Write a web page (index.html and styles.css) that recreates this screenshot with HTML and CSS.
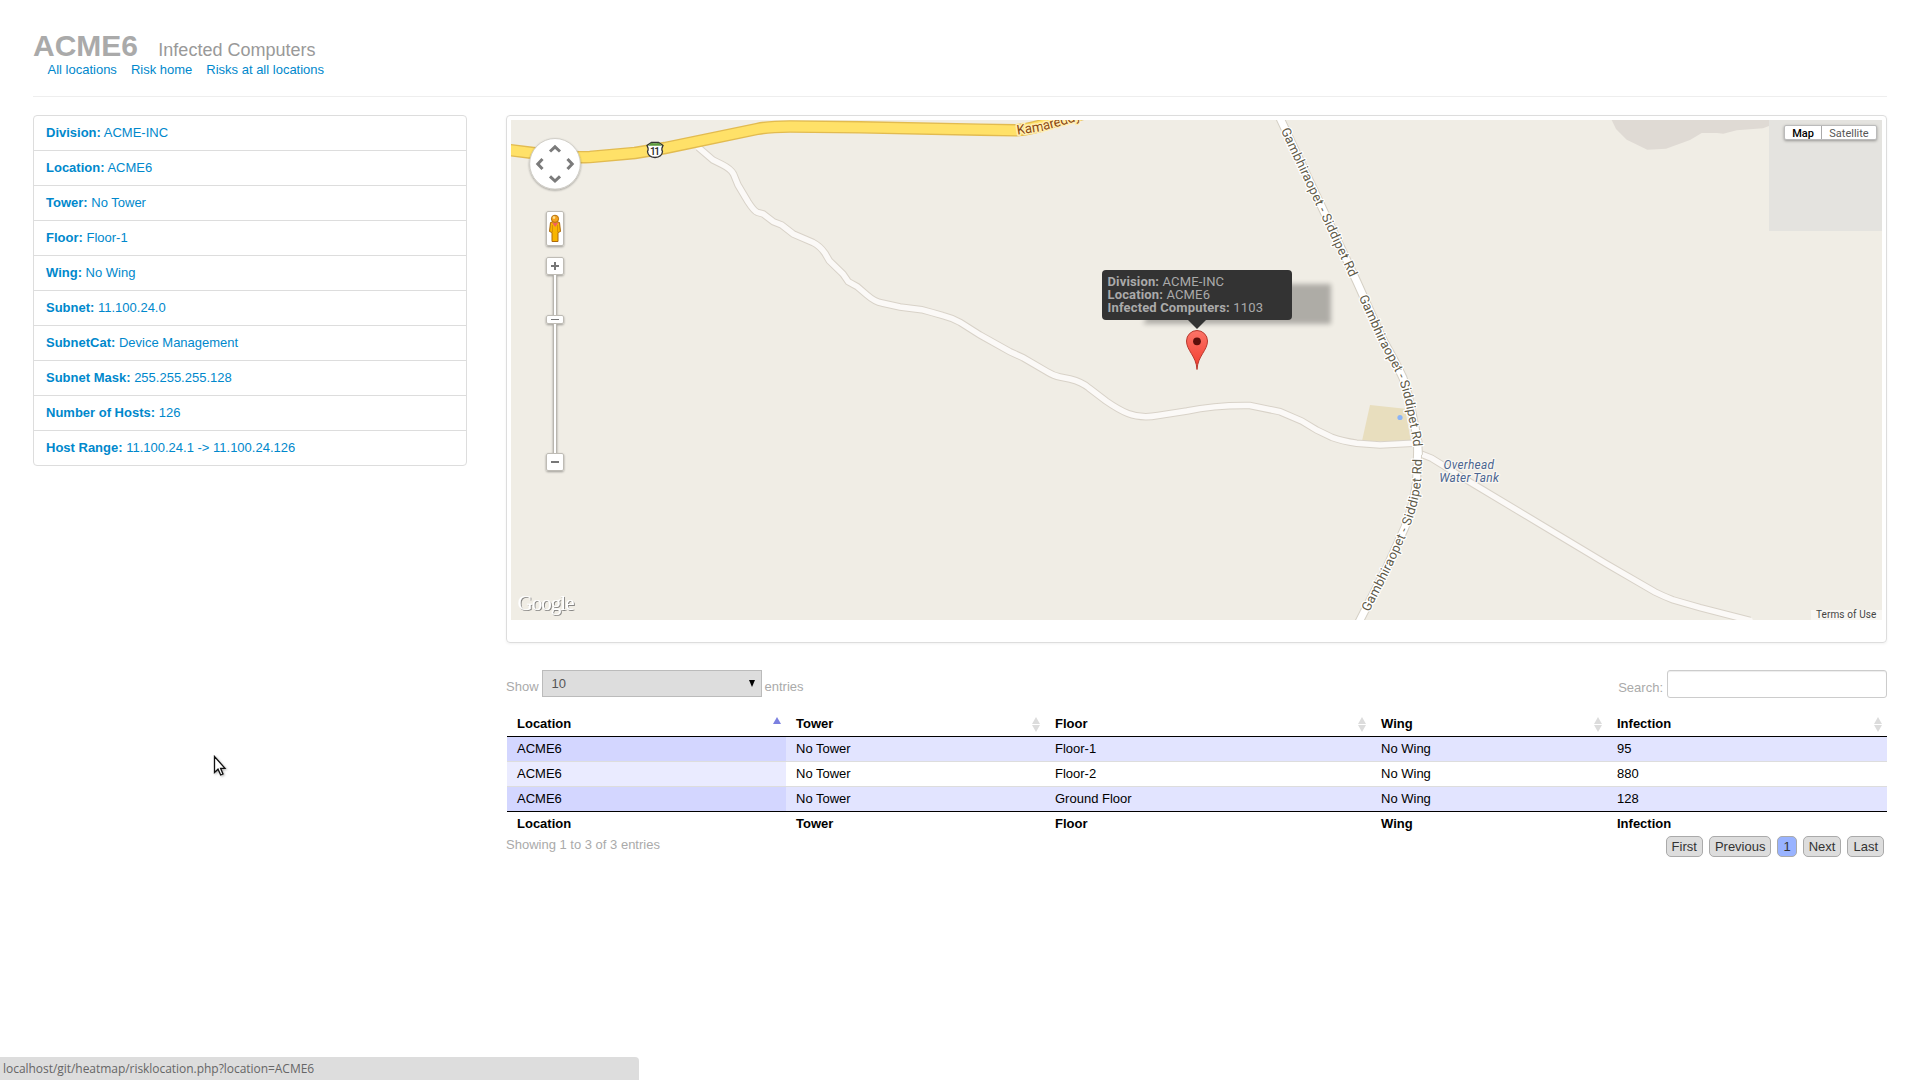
FILE: index.html
```html
<!DOCTYPE html>
<html lang="en">
<head>
<meta charset="utf-8">
<title>ACME6 - Infected Computers</title>
<link rel="stylesheet" href="styles.css">
</head>
<body>
<div class="page">
  <header class="page-header">
    <h1>ACME6 <small>Infected Computers</small></h1>
    <nav class="links"><a>All locations</a><a>Risk home</a><a>Risks at all locations</a></nav>
  </header>
  <div class="columns">
    <ul class="facts">
      <li><b>Division:</b> ACME-INC</li>
      <li><b>Location:</b> ACME6</li>
      <li><b>Tower:</b> No Tower</li>
      <li><b>Floor:</b> Floor-1</li>
      <li><b>Wing:</b> No Wing</li>
      <li><b>Subnet:</b> 11.100.24.0</li>
      <li><b>SubnetCat:</b> Device Management</li>
      <li><b>Subnet Mask:</b> 255.255.255.128</li>
      <li><b>Number of Hosts:</b> 126</li>
      <li><b>Host Range:</b> 11.100.24.1 -&gt; 11.100.24.126</li>
    </ul>
    <main class="content">
      <section class="thumbnail">
        <div class="map">
          <svg class="map-canvas" viewBox="511 120 1371 500" width="1371" height="500">
            <defs>
              <linearGradient id="pin" x1="0" y1="0" x2="0" y2="1"><stop offset="0" stop-color="#fc7468"/><stop offset="1" stop-color="#f23a2c"/></linearGradient>
              <filter id="soft" x="-10%" y="-30%" width="120%" height="160%"><feGaussianBlur stdDeviation="2.6"/></filter>
              <filter id="ctl" x="-20%" y="-20%" width="150%" height="150%"><feDropShadow dx="0" dy="1" stdDeviation="1" flood-opacity=".35"/></filter>
              <filter id="logo" x="-10%" y="-20%" width="130%" height="150%"><feDropShadow dx="1" dy="1" stdDeviation=".7" flood-color="#666" flood-opacity=".75"/></filter>
              <path id="main" d="M1279 116L1357 282L1383 340Q1397 365 1403 378Q1409 395 1412 413L1417 437L1418.5 455"/>
              <path id="south" d="M1358 624L1387 567L1405 527Q1415 500 1416.7 480L1418 440"/>
              <path id="lane" d="M698.3 147.3L713 160L721.7 164.3Q731 169 733.5 174L738 185L748 201.7Q754 211 757.3 212.3L763.3 214L773.3 221.7L781.7 225L793.3 234L813 242.5Q820 246 825 253.3L829.3 260.7L843 274L848.3 281.7L857.3 286.7L867 295Q875 302 882 303L900 307L921.7 309.7L932 312.5L943 315.7Q952 318 960 322.3L980 335L1010 351.7L1023 357.7L1047 371.7Q1054 376 1060 377L1070 379Q1082 382 1089 388L1106 401Q1119 410 1128 413.5Q1141 418.5 1158 415.5L1187 411Q1215 405 1250 405.5L1280 411.7L1301.7 421L1316.7 430L1331.7 437.3Q1342 441 1356.7 443.3L1380 445L1413 443.3"/>
              <path id="east" d="M1421 454L1431.7 458.3L1473.3 484L1540 524L1606.7 564L1655 592Q1663 596 1673.3 600L1700 607.7L1750 620.5"/>
              <path id="highway" d="M505 149.5L533 153Q560 158 590 157L635 153Q650 150.500 665 148L757 129Q770 126.500 790 126.500L860 127.300L980 129.700L1016 130.300Q1032 129 1049 123L1086 113"/>
              <path id="kam" d="M1016.500 135L1041.500 131L1060 126L1095 115.500"/>
            </defs>
            <rect x="511" y="120" width="1371" height="500" fill="#f0ede5"/>
            <path d="M1611.700 120L1616 129L1626.700 139.700L1647.300 149.700L1666 148.700L1690 140L1701.700 133L1717 133L1723.300 133.700L1736.700 130.300L1763 128.300L1769 126V120Z" fill="#dfdad4"/>
            <rect x="1769" y="120" width="113" height="111" fill="#e4e3df"/>
            <path d="M1370 405L1405 408.700L1411 441.700L1362 441Z" fill="#e8debe"/>
            <circle cx="1400" cy="417.500" r="2.600" fill="#8ab4f8"/>
            <g class="road-edge"><use href="#lane"/><use href="#east"/></g>
            <g class="road-fill"><use href="#lane"/><use href="#east"/></g>
            <g class="main-edge"><use href="#main"/><use href="#south"/></g>
            <g class="main-fill"><use href="#main"/><use href="#south"/></g>
            <use href="#highway" class="highway-edge"/>
            <use href="#highway" class="highway-fill"/>
            <g class="road-name">
              <text dy="4.500"><textPath href="#main" startOffset="13.500" textLength="163">Gambhiraopet - Siddipet Rd</textPath></text>
              <text dy="4.500"><textPath href="#main" startOffset="198" textLength="162">Gambhiraopet - Siddipet Rd</textPath></text>
              <text dy="4.500"><textPath href="#south" startOffset="15.500" textLength="162">Gambhiraopet - Siddipet Rd</textPath></text>
            </g>
            <text class="highway-name"><textPath href="#kam" startOffset="1" textLength="66">Kamareddy</textPath></text>
            <g class="place"><text x="1443.500" y="468.800" textLength="50.500">Overhead</text><text x="1439.300" y="481.800" textLength="59.500">Water Tank</text></g>
            <g>
              <path d="M658.500 142.500H651.500L647 145.500Q649 149 647.500 151.500Q648 157 655 157.500Q662 157 662.500 151.500Q661 149 663 145.500Z" fill="#fff" stroke="#333" stroke-width="1.300"/>
              <path d="M648 145.800L651.500 142.700Q655 144 658.500 142.700L662 145.800Z" fill="#5d9b3c"/>
              <text x="650" y="154.800" class="shield" textLength="10">11</text>
            </g>
            <g filter="url(#ctl)">
              <circle cx="555" cy="163.800" r="25.300" fill="#fff" stroke="#c9c6bf" stroke-width=".8"/>
              <path d="M553.500 273V455M556.500 273V455" stroke="#b9b6af"/>
              <path d="M555 273V455" stroke="#fff" stroke-width="2"/>
              <g fill="#fff" stroke="#bfbcb5" stroke-width="1">
                <rect x="546.500" y="211.500" width="17" height="34" rx="1.500"/>
                <rect x="546.500" y="257.500" width="17" height="17" rx="1.500"/>
                <rect x="546.500" y="315.500" width="17" height="8" rx="1.500"/>
                <rect x="546.500" y="453.500" width="17" height="17" rx="1.500"/>
              </g>
            </g>
            <path d="M550 151.500L555 146.800L560 151.500M550 176.300L555 181L560 176.300M542.500 159L537.800 164L542.500 169M567.500 159L572.200 164L567.500 169" fill="none" stroke="#7b7b7b" stroke-width="3"/>
            <path d="M551 266H559M555 262V270M551 462H559" stroke="#777" stroke-width="2"/>
            <path d="M551 319.500H559" stroke="#777"/>
            <path d="M550.500 222.500Q555 220 559.500 222.500L560.500 231.500L558 232.500V241.500H552V232.500L549.500 231.500Z" fill="#f8b500" stroke="#ad6a0c"/>
            <path d="M552 222.500H558.500L555.200 227Z" fill="#f0625c"/>
            <path d="M552.500 225V232M557.500 225V232" stroke="#c98208" stroke-width=".7"/>
            <circle cx="555" cy="218.800" r="3.600" fill="#f5a21c" stroke="#b4710e"/>
            <circle cx="554" cy="217.600" r="1.300" fill="#ffe08a"/>
            <text x="517.500" y="610" class="google" textLength="57" filter="url(#logo)">Google</text>
            <path d="M1143 324L1165 284H1331V324Z" fill="#000" opacity=".27" filter="url(#soft)"/>
            <path d="M1197 369.500C1196.300 356 1186.500 350.500 1186.500 341A10.500 10.500 0 0 1 1207.500 341C1207.500 350.500 1197.700 356 1197 369.500Z" fill="url(#pin)" stroke="#b8382d"/>
            <circle cx="1197" cy="341.300" r="3.900" fill="#5c0f0b"/>
          </svg>
          <div class="tip"><b>Division:</b> ACME-INC<br><b>Location:</b> ACME6<br><b>Infected Computers:</b> 1103</div>
          <div class="map-type"><span class="on">Map</span><span>Satellite</span></div>
          <div class="terms">Terms of Use</div>
        </div>
      </section>
      <div class="table-tools">
        <label class="length">Show <span class="select">10<svg width="6" height="7" viewBox="0 0 6 7"><path d="M0 0H6L3 7Z"/></svg></span> entries</label>
        <label class="search">Search: <input type="text"></label>
      </div>
      <table>
        <colgroup><col class="c1"><col class="c2"><col class="c3"><col class="c4"><col class="c5"></colgroup>
        <thead><tr>
          <th><div class="head">Location<svg class="sort asc" viewBox="0 0 8 15"><path d="M4 0L8 7H0Z"/></svg></div></th>
          <th><div class="head">Tower<svg class="sort" viewBox="0 0 8 15"><path d="M4 0L8 7H0ZM0 8H8L4 15Z"/></svg></div></th>
          <th><div class="head">Floor<svg class="sort" viewBox="0 0 8 15"><path d="M4 0L8 7H0ZM0 8H8L4 15Z"/></svg></div></th>
          <th><div class="head">Wing<svg class="sort" viewBox="0 0 8 15"><path d="M4 0L8 7H0ZM0 8H8L4 15Z"/></svg></div></th>
          <th><div class="head">Infection<svg class="sort" viewBox="0 0 8 15"><path d="M4 0L8 7H0ZM0 8H8L4 15Z"/></svg></div></th>
        </tr></thead>
        <tbody>
          <tr class="odd"><td>ACME6</td><td>No Tower</td><td>Floor-1</td><td>No Wing</td><td>95</td></tr>
          <tr><td>ACME6</td><td>No Tower</td><td>Floor-2</td><td>No Wing</td><td>880</td></tr>
          <tr class="odd"><td>ACME6</td><td>No Tower</td><td>Ground Floor</td><td>No Wing</td><td>128</td></tr>
        </tbody>
        <tfoot><tr><th>Location</th><th>Tower</th><th>Floor</th><th>Wing</th><th>Infection</th></tr></tfoot>
      </table>
      <div class="table-foot">
        <span>Showing 1 to 3 of 3 entries</span>
        <div class="pager"><a>First</a><a>Previous</a><a class="active">1</a><a>Next</a><a>Last</a></div>
      </div>
    </main>
  </div>
</div>
<svg class="cursor" width="16" height="24" viewBox="0 0 16 24"><path d="M1.500 1.500V17.500L5 14.200L7.700 20L10 19L7.600 13.300H12Z" fill="#fff" stroke="#111" stroke-width="1.300"/></svg>
<div class="status">localhost/git/heatmap/risklocation.php?location=ACME6</div>
</body>
</html>
```
FILE: styles.css
```css
* { box-sizing: border-box; }
html, body { height: 100%; }
body { margin: 0; background: #fff; color: #aaa; font: 13px/18px "Liberation Sans", Arial, sans-serif; overflow: hidden; }
.page { padding: 28px 33px 0; }
.page-header { height: 69px; border-bottom: 1px solid #eee; margin-bottom: 18px; }
h1 { margin: 0; font-size: 30px; line-height: 36px; color: #aaa; }
h1 small { font-size: 18px; font-weight: 400; color: #999; margin-left: 12px; }
.links { display: flex; gap: 14px; padding-left: 14.500px; margin-top: -7px; color: #08c; }
.columns { display: flex; gap: 39px; align-items: flex-start; }
.facts { width: 434px; margin: 0; padding: 0; list-style: none; border: 1px solid #ddd; border-radius: 4px; color: #08c; }
.facts li { height: 35px; padding: 8px 12px; border-bottom: 1px solid #ddd; }
.facts li:last-child { height: 34px; border-bottom: 0; }
.content { width: 1381px; }
.thumbnail { height: 528px; padding: 4px; border: 1px solid #ddd; border-radius: 4px; box-shadow: 0 1px 3px rgba(0,0,0,.055); }
.map { position: relative; width: 1371px; height: 500px; overflow: hidden; font-family: Roboto, sans-serif; }
.map-canvas { display: block; }
.road-edge { fill: none; stroke: #d8d2c8; stroke-width: 7.500; }
.road-fill { fill: none; stroke: #fbf9f7; stroke-width: 5.500; stroke-linecap: round; }
.main-edge { fill: none; stroke: #d5d0c5; stroke-width: 9; }
.main-fill { fill: none; stroke: #fff; stroke-width: 7; }
.highway-edge { fill: none; stroke: #e2bb50; stroke-width: 12.500; }
.highway-fill { fill: none; stroke: #ffe168; stroke-width: 9.800; }
.road-name { font-size: 13px; fill: #5f5b4a; stroke: #fff; stroke-width: 2.500; paint-order: stroke; stroke-linejoin: round; }
.highway-name { font-size: 13.500px; fill: #8a4712; stroke: #ffeeb0; stroke-width: 3; paint-order: stroke; stroke-linejoin: round; }
.place { font-size: 12px; font-style: italic; fill: #4b6590; stroke: #f8f6f1; stroke-width: 2.500; paint-order: stroke; stroke-linejoin: round; }
.shield { font-size: 10px; font-weight: 500; fill: #222; }
.google { font-family: "Liberation Serif", serif; font-size: 21px; fill: #fff; }
.tip { position: absolute; left: 591px; top: 150px; width: 190px; height: 50px; padding: 5px 5.500px 0; background: #333; border-radius: 4px; color: #aaa; font-size: 13px; line-height: 13px; letter-spacing: .15px; white-space: nowrap; }
.tip::after { content: ""; position: absolute; left: 85px; top: 49px; border: 10px solid transparent; border-top-color: #333; border-bottom: 0; }
.map-type { position: absolute; left: 1273px; top: 5px; height: 15px; display: flex; background: #fff; border: 1px solid #bbb; border-radius: 2px; box-shadow: 0 1px 3px rgba(0,0,0,.35); font-size: 11px; line-height: 15px; color: #565656; }
.map-type span { width: 54px; text-align: center; }
.map-type .on { width: 37px; border-right: 1px solid #aaa; color: #000; font-weight: 500; }
.terms { position: absolute; right: 0; bottom: 0; width: 71px; height: 10px; padding-left: 5px; background: rgba(255,255,255,.5); color: #444; font-size: 10px; line-height: 9px; letter-spacing: .1px; white-space: nowrap; }
.table-tools { display: flex; justify-content: space-between; margin-top: 27px; height: 42px; }
.length, .search { display: flex; height: 28px; gap: 4px; }
.length { gap: 3px; line-height: 33px; }
.search { line-height: 35px; }
.select { display: flex; justify-content: space-between; align-items: center; width: 220px; height: 27px; padding: 0 6px 0 9px; background: #ddd; border: 1px solid #bbb; color: #555; line-height: 26px; }
.select + * { margin-left: 1px; }
.select svg { margin-top: -1px; fill: #000; }
.search input { width: 220px; height: 28px; border: 1px solid #ccc; border-radius: 3px; background: #fff; box-shadow: inset 0 1px 1px rgba(0,0,0,.075); }
table { width: 1380px; margin-left: 1px; table-layout: fixed; border-collapse: separate; border-spacing: 0; color: #000; }
.c1 { width: 279px; } .c2 { width: 259px; } .c3 { width: 326px; } .c4 { width: 236px; } .c5 { width: 280px; }
th, td { padding: 3px 10px; text-align: left; }
thead th { padding-right: 5px; border-bottom: 1px solid #000; }
.head { display: flex; justify-content: space-between; height: 18px; }
.sort { width: 8px; height: 15px; margin-top: 2px; fill: #dcdcdc; }
.asc { fill: #7b80e0; }
td { border-bottom: 1px solid #ddd; }
tbody tr:last-child td { border-bottom-color: #000; }
.odd td { background: #e2e4ff; }
td:first-child { background: #eaebff; }
.odd td:first-child { background: #d3d6ff; }
.table-foot { display: flex; justify-content: space-between; }
.pager { display: flex; gap: 6px; padding-right: 3px; color: #333; }
.pager a { height: 21px; padding: 1px 5px 0; border: 1px solid #aaa; border-radius: 5px; background: #ddd; }
.pager .active { background: #99b3ff; }
.cursor { position: absolute; left: 213px; top: 755px; filter: drop-shadow(1px 1px 1px rgba(0,0,0,.3)); }
.status { position: fixed; left: 0; bottom: 0; width: 639px; height: 23px; padding-left: 3px; background: #ddd; border-top-right-radius: 4px; color: #666; font: 12px/24px "Open Sans", sans-serif; letter-spacing: -.04px; }
```
